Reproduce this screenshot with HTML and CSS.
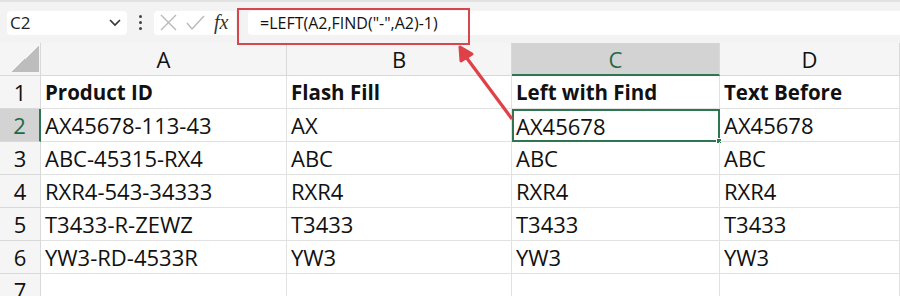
FILE: index.html
```html
<!DOCTYPE html>
<html lang="en">

<head>
    <meta charset="UTF-8">
    <meta name="viewport" content="width=device-width, initial-scale=1.0">
    <title>Left with Find</title>

    <link rel="stylesheet" href="styles.css">
</head>

<body>
    <div class="bar">
        <div class="namebox">
            <span>C2</span>
            <svg width="14" height="10" viewBox="0 0 14 10"><path d="M2 2 L7 7 L12 2" fill="none" stroke="#333" stroke-width="1.6"/></svg>
        </div>
        <div class="dots"><i></i><i></i><i></i></div>
        <div class="fnbox">
            <svg width="19" height="19" viewBox="0 0 19 19"><path d="M2 2 L17 17 M17 2 L2 17" stroke="#b9b9b9" stroke-width="1.4"/></svg>
            <svg width="21" height="19" viewBox="0 0 21 19"><path d="M2 10 L7 16 L19 3" fill="none" stroke="#b9b9b9" stroke-width="1.4"/></svg>
            <span class="fx">fx</span>
        </div>
        <div class="formula">=LEFT(A2,FIND("-",A2)-1)</div>
    </div>

    <div class="sheet">
        <div class="corner"><span></span></div>
        <div class="colhead">A</div>
        <div class="colhead">B</div>
        <div class="colhead sel">C</div>
        <div class="colhead">D</div>

        <div class="rowhead">1</div>
        <div class="cell b">Product ID</div>
        <div class="cell b">Flash Fill</div>
        <div class="cell b">Left with Find</div>
        <div class="cell b">Text Before</div>

        <div class="rowhead sel">2</div>
        <div class="cell">AX45678-113-43</div>
        <div class="cell">AX</div>
        <div class="cell active">AX45678<span class="handle"></span></div>
        <div class="cell">AX45678</div>

        <div class="rowhead">3</div>
        <div class="cell">ABC-45315-RX4</div>
        <div class="cell">ABC</div>
        <div class="cell">ABC</div>
        <div class="cell">ABC</div>

        <div class="rowhead">4</div>
        <div class="cell">RXR4-543-34333</div>
        <div class="cell">RXR4</div>
        <div class="cell">RXR4</div>
        <div class="cell">RXR4</div>

        <div class="rowhead">5</div>
        <div class="cell">T3433-R-ZEWZ</div>
        <div class="cell">T3433</div>
        <div class="cell">T3433</div>
        <div class="cell">T3433</div>

        <div class="rowhead">6</div>
        <div class="cell">YW3-RD-4533R</div>
        <div class="cell">YW3</div>
        <div class="cell">YW3</div>
        <div class="cell">YW3</div>

        <div class="rowhead">7</div>
        <div class="cell"></div>
        <div class="cell"></div>
        <div class="cell"></div>
        <div class="cell"></div>
    </div>

    <!-- callout over the sheet -->
    <div class="callout"></div>
    <svg class="arrow" width="900" height="296" viewBox="0 0 900 296">
        <path d="M512 119 L466 57" stroke="#e04048" stroke-width="3.2" fill="none"/>
        <path d="M460 47 L472 54 L461 61 Z" fill="#e04048" stroke="#e04048" stroke-width="3" stroke-linejoin="round"/>
    </svg>
</body>

</html>
```

FILE: styles.css
```css
* {
    margin: 0;
    padding: 0;
    box-sizing: border-box;
}

body {
    width: 900px;
    height: 296px;
    overflow: hidden;
    background-color: #fff;
    font-family: "Open Sans", "Liberation Sans", sans-serif;
    color: #111;
    position: relative;
}

.bar {
    height: 43px;
    background-color: #f3f3f3;
    border-top: 2px solid #e2e2e2;
    display: flex;
    align-items: center;
    padding: 0 0 0 7px;
}

.namebox {
    width: 120px;
    height: 24px;
    background-color: #fff;
    border-radius: 4px;
    display: flex;
    align-items: center;
    justify-content: space-between;
    padding: 0 5px 0 3px;
    font-size: 17px;
    color: #222;
}

.dots {
    width: 27px;
    display: flex;
    flex-direction: column;
    align-items: center;
    gap: 3px;
}

.dots i {
    width: 3px;
    height: 3px;
    border-radius: 50%;
    background-color: #444;
}

.fnbox {
    width: 82px;
    height: 24px;
    background-color: #fff;
    border-radius: 4px 0 0 4px;
    display: flex;
    align-items: center;
    gap: 7px;
    padding-left: 5px;
}

.fx {
    font-family: "Liberation Serif", serif;
    font-style: italic;
    font-size: 20px;
    color: #333;
    margin-left: 1px;
}

.formula {
    flex: 1;
    height: 24px;
    margin-left: 12px;
    background-color: #fff;
    border-radius: 4px 0 0 4px;
    padding-left: 12px;
    font-size: 16px;
    line-height: 24px;
    color: #111;
}

.sheet {
    display: grid;
    grid-template-columns: 41px 246px 225px 208px 180px;
    grid-template-rows: 33px repeat(7, 33px);
}

.corner,
.colhead,
.rowhead {
    background-color: #f5f5f5;
    border-right: 1px solid #d9d9d9;
    border-bottom: 1px solid #d9d9d9;
    font-size: 22px;
    color: #111;
    display: flex;
    justify-content: center;
    align-items: center;
}

.corner {
    align-items: flex-end;
    justify-content: flex-end;
    padding: 0 1px 3px 0;
}

.corner span {
    width: 28px;
    height: 26px;
    background: linear-gradient(to bottom right, transparent 50%, #bdbdbd 50%);
}

.colhead.sel {
    background-color: #d3d3d3;
    color: #1f6b43;
    border-bottom: 2px solid #2e7552;
}

.rowhead.sel {
    background-color: #d3d3d3;
    color: #1f6b43;
    border-right: 2px solid #2e7552;
}

.cell {
    border-right: 1px solid #e1e1e1;
    border-bottom: 1px solid #e1e1e1;
    font-size: 22px;
    padding-left: 4px;
    display: flex;
    align-items: center;
    white-space: nowrap;
    position: relative;
}

.cell.b {
    font-weight: bold;
    font-size: 20.5px;
}

.cell.active {
    border: 2px solid #2e7552;
    padding-left: 2px;
}

.handle {
    position: absolute;
    right: -4px;
    bottom: -4px;
    width: 6px;
    height: 6px;
    background-color: #2e7552;
    border: 1px solid #fff;
}

.callout {
    position: absolute;
    left: 237px;
    top: 8px;
    width: 233px;
    height: 37px;
    border: 2px solid #d9454c;
}

.arrow {
    position: absolute;
    left: 0;
    top: 0;
}
```
